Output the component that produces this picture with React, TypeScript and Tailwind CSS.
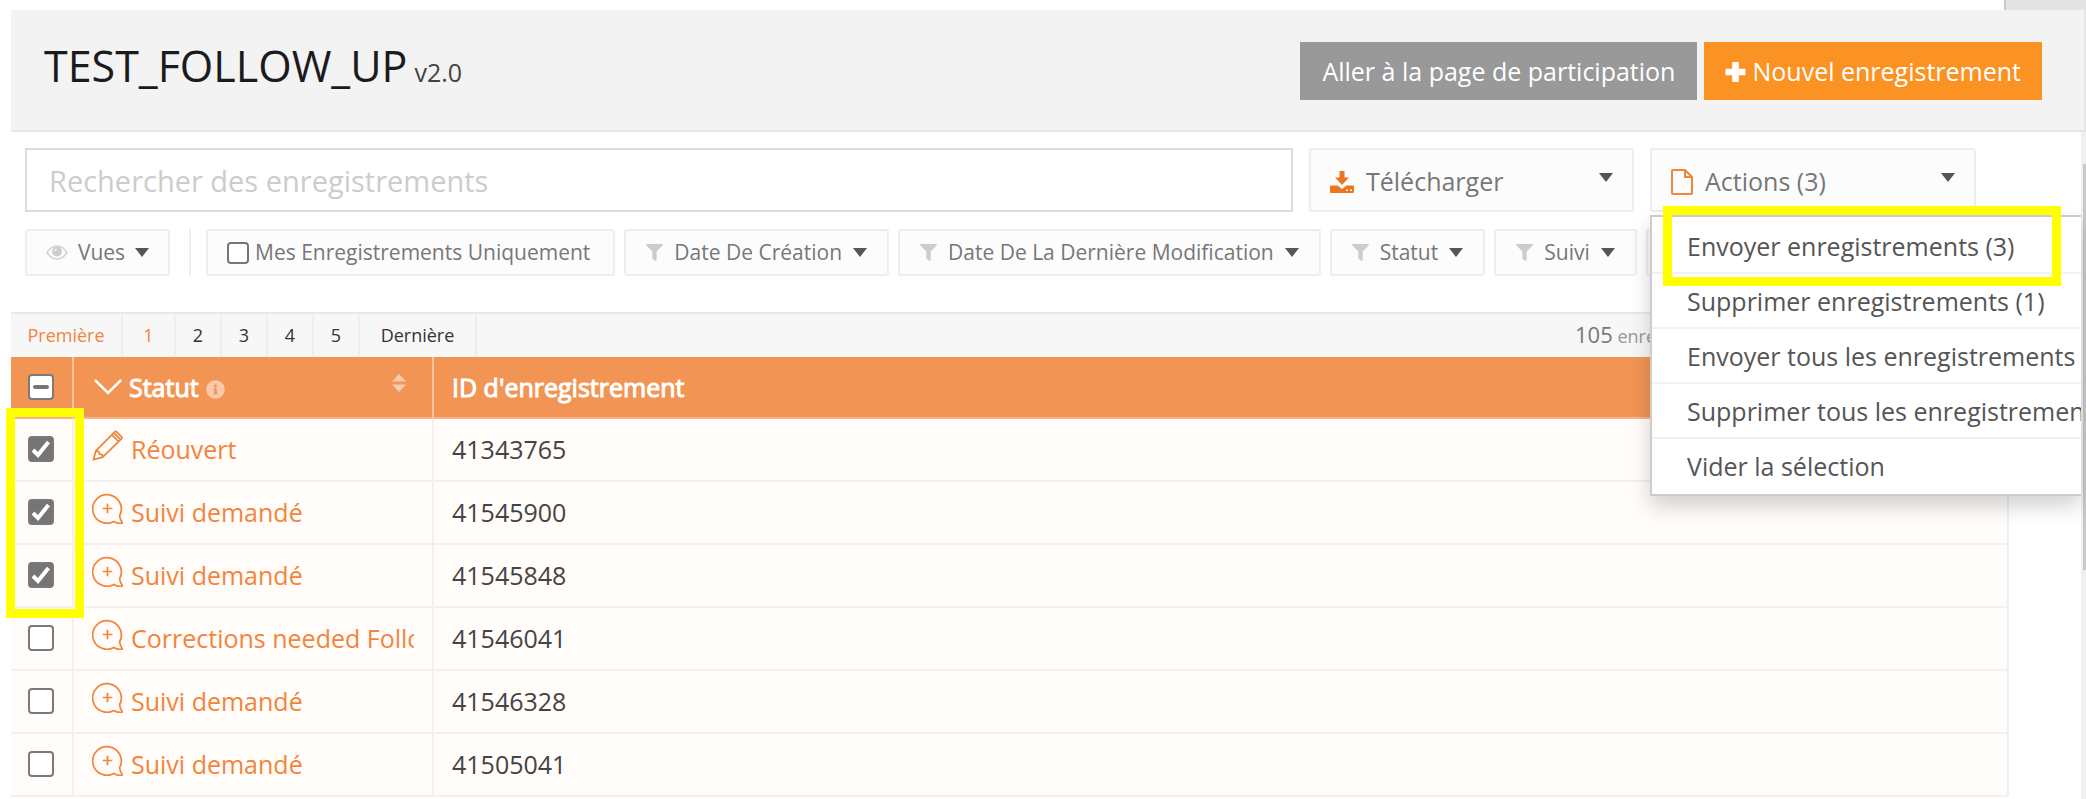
import React from 'react';
import { FaFilter, FaInfoCircle } from 'react-icons/fa';

const filters = ['Date De Création', 'Date De La Dernière Modification', 'Statut', 'Suivi'];

const pages = ['1', '2', '3', '4', '5'];

const menuItems = [
  'Envoyer enregistrements (3)',
  'Supprimer enregistrements (1)',
  'Envoyer tous les enregistrements',
  'Supprimer tous les enregistrements',
  'Vider la sélection',
];

const records = [
  { id: '41343765', status: 'Réouvert', icon: 'pencil', checked: true },
  { id: '41545900', status: 'Suivi demandé', icon: 'bubble', checked: true },
  { id: '41545848', status: 'Suivi demandé', icon: 'bubble', checked: true },
  { id: '41546041', status: 'Corrections needed Follow up', icon: 'bubble', checked: false },
  { id: '41546328', status: 'Suivi demandé', icon: 'bubble', checked: false },
  { id: '41505041', status: 'Suivi demandé', icon: 'bubble', checked: false },
];

function Caret() {
  return (
    <svg viewBox="0 0 14 9" className="h-[9px] w-[14px] shrink-0 fill-[#555]">
      <path d="M0 0h14L7 9z" />
    </svg>
  );
}

function EyeIcon() {
  return (
    <svg viewBox="0 0 22 15" className="h-[15px] w-[22px] shrink-0">
      <path d="M1 7.500Q5 1 11 1t10 6.500Q17 14 11 14T1 7.500z" fill="none" stroke="#d4d4d4" strokeWidth="1.500" />
      <circle cx="11" cy="6.500" r="5" fill="#ccc" />
      <path d="M8.500 6.500Q8.500 4 11 4" fill="none" stroke="#fff" />
    </svg>
  );
}

function PlusIcon() {
  return (
    <svg viewBox="0 0 21 21" className="h-[20px] w-[21px] shrink-0 fill-white">
      <path d="M8 0h5q1 0 1 1v6h6q1 0 1 1v5q0 1-1 1h-6v6q0 1-1 1H8q-1 0-1-1v-6H1q-1 0-1-1V8q0-1 1-1h6V1q0-1 1-1z" />
    </svg>
  );
}

function DownloadIcon() {
  return (
    <svg viewBox="0 0 24 22" className="h-[22px] w-[24px] shrink-0">
      <path d="M9.500 0h5v6.500H19L12 14 5 6.500h4.500z" fill="#ee7420" />
      <path d="M1 14.500h6.500L12 18l4.500-3.500H23q1 0 1 1V21q0 1-1 1H1q-1 0-1-1v-5.500q0-1 1-1z" fill="#ee7420" />
      <path d="M16 18.500h2v1.500h-2zM20 18.500h2v1.500h-2z" fill="#fcfcfc" />
    </svg>
  );
}

function FileIcon() {
  return (
    <svg viewBox="0 0 22 26" className="h-[26px] w-[22px] shrink-0 fill-none stroke-[#f2853c] stroke-2">
      <path d="M2 1h12l7 7v16q0 1-1 1H2q-1 0-1-1V2q0-1 1-1zM14 1v7h7" />
    </svg>
  );
}

function PencilIcon() {
  return (
    <svg viewBox="0 0 32 32" className="mb-2 h-[31px] w-[31px] shrink-0 fill-none stroke-[#f2853c] stroke-[1.8]">
      <path d="M1.500 30.500L4 21.500 23.500 2q1-1 2 0l5 5q1 1 0 2L11 28zM20.500 5l7 7M22.500 3l7 7M4 21.500l2.500.5 1.500 3 2.500.5.5 2.500" />
    </svg>
  );
}

function BubbleIcon() {
  return (
    <svg viewBox="0 0 32 32" className="mb-2 h-[31px] w-[31px] shrink-0 fill-none stroke-[#f2853c] stroke-[1.8]">
      <path d="M22.500 29.500A14.800 14.800 0 1 1 28.500 23.500Q29 28 31.500 31q-5 1-9-1.500zM16 11v10M11 16h10" />
    </svg>
  );
}

type CheckboxProps = {
  label: string;
  checked?: boolean;
  partial?: boolean;
};

function Checkbox({ label, checked, partial }: CheckboxProps) {
  return (
    <span className="grid h-[26px] w-[26px]">
      <input
        type="checkbox"
        defaultChecked={checked}
        aria-label={label}
        className="peer col-start-1 row-start-1 appearance-none rounded-[4px] border-2 border-[#7a7a7a] bg-white checked:bg-[#757575]"
      />
      <svg
        viewBox="0 0 26 26"
        className="pointer-events-none invisible col-start-1 row-start-1 fill-none stroke-white stroke-[4] peer-checked:visible"
      >
        <path d="M5 14l5 5L20.500 6" />
      </svg>
      {partial && (
        <svg viewBox="0 0 26 26" className="pointer-events-none col-start-1 row-start-1 fill-none stroke-[#757575] stroke-[4]">
          <path d="M7 13h12" strokeLinecap="round" />
        </svg>
      )}
    </span>
  );
}

export default function App() {
  return (
    <div className="flex h-screen flex-col overflow-hidden bg-white font-['Open_Sans','Noto_Sans',sans-serif] text-[#555]">
      <div className="flex h-[10px] shrink-0 justify-end">
        <div className="w-[82px] border-l-2 border-[#c8c8c8] bg-[#e4e4e4]" />
      </div>

      <header className="ml-[11px] flex h-[122px] shrink-0 justify-between border-r-2 border-b-2 border-[#e6e6e6] bg-[#f3f3f3] pr-[42px] pl-[33px]">
        <h1 className="flex items-baseline gap-[7px] pt-[26px] text-[43px] leading-[60px] text-[#1b1b1f]">
          TEST_FOLLOW_UP
          <small className="text-[25px] text-[#444]">v2.0</small>
        </h1>
        <div className="flex gap-[7px] pt-8">
          <button className="h-[58px] bg-[#999] px-[22px] pt-[2px] text-[25px] text-white">Aller à la page de participation</button>
          <button className="flex h-[58px] items-center gap-[6px] bg-[#fb9224] px-[21px] pt-[2px] text-[25px] text-white">
            <PlusIcon />
            Nouvel enregistrement
          </button>
        </div>
      </header>

      <main className="flex min-h-0 flex-1">
        <div className="min-w-0 flex-1 pl-[11px]">
          <div className="flex gap-4 pt-4 pr-[105px] pl-[14px]">
            <input
              type="text"
              aria-label="Rechercher des enregistrements"
              placeholder="Rechercher des enregistrements"
              className="h-[64px] min-w-0 flex-1 border-2 border-[#dcdcdc] px-[22px] text-[29px] placeholder:text-[#ccc]"
            />
            <button className="flex h-[64px] w-[325px] items-center gap-3 rounded-[3px] border-2 border-[#eceeef] bg-[#fcfcfc] px-[19px] pt-[3px] text-[25px] text-[#777]">
              <DownloadIcon />
              Télécharger
              <span className="ml-auto pb-2">
                <Caret />
              </span>
            </button>
            <div className="relative">
              <button className="flex h-[64px] w-[326px] items-center gap-3 rounded-[3px] border-2 border-[#eceeef] bg-[#fcfcfc] px-[19px] pt-[3px] text-[25px] text-[#777]">
                <FileIcon />
                Actions (3)
                <span className="ml-auto pb-2">
                  <Caret />
                </span>
              </button>
              <ul className="absolute top-[67px] left-0 z-10 w-[431px] overflow-hidden border-2 border-r-0 border-[#ccc] bg-white pt-[2px] shadow-[0_10px_20px_rgba(0,0,0,0.18)]">
                {menuItems.map((item) => (
                  <li key={item} className="h-[55px] border-b-2 border-[#f1f1f1] last:border-b-0">
                    <button className="block w-full pt-[7px] pl-[35px] text-left text-[25px] leading-[40px] whitespace-nowrap text-[#555]">
                      {item}
                    </button>
                  </li>
                ))}
              </ul>
              <div className="pointer-events-none absolute top-[58px] left-[13px] z-20 h-[80px] w-[398px] border-[9px] border-[#ff0]" />
            </div>
          </div>

          <div className="flex gap-[9px] overflow-hidden pt-[17px] pl-[14px] text-[21px] whitespace-nowrap text-[#777]">
            <button className="flex h-[47px] w-[145px] shrink-0 items-center justify-center gap-[10px] rounded-[3px] border-2 border-[#eceeef] bg-[#fcfcfc]">
              <EyeIcon />
              Vues
              <Caret />
            </button>
            <div className="mr-[6px] ml-[10px] w-[2px] shrink-0 bg-[#eee]" />
            <label className="flex h-[47px] shrink-0 items-center gap-[6px] rounded-[3px] border-2 border-[#eceeef] bg-[#fcfcfc] pr-[23px] pl-[19px]">
              <input type="checkbox" className="h-[22px] w-[22px] appearance-none rounded-[4px] border-2 border-[#767676] bg-white" />
              Mes Enregistrements Uniquement
            </label>
            {filters.map((label) => (
              <button
                key={label}
                className="flex h-[47px] shrink-0 items-center gap-[11px] rounded-[3px] border-2 border-[#eceeef] bg-[#fcfcfc] px-[20px]"
              >
                <FaFilter className="h-[17px] w-[17px] text-[#ccc]" />
                {label}
                <Caret />
              </button>
            ))}
            <button aria-label="Plus de filtres" className="h-[47px] w-[120px] shrink-0 rounded-[3px] border-2 border-[#eceeef] bg-[#fcfcfc]" />
          </div>

          <nav className="mr-[72px] mt-9 flex h-[45px] items-stretch border-t-2 border-[#e8e8e8] bg-[#f7f7f7] text-[18px] text-[#333]">
            <button className="w-[112px] border-r-2 border-[#eee] text-[#f2853c]">Première</button>
            {pages.map((page) => (
              <button
                key={page}
                className={page === '1' ? 'w-[53px] border-r-2 border-[#eee] text-[#f2853c]' : 'w-[46px] border-r-2 border-[#eee]'}
              >
                {page}
              </button>
            ))}
            <button className="w-[117px] border-r-2 border-[#eee]">Dernière</button>
            <p className="ml-auto w-[434px] leading-[41px] text-[#999]">
              <span className="text-[22px] text-[#777]">105</span> enregistrements
            </p>
          </nav>

          <div className="relative mr-[72px]">
            <table className="w-full table-fixed border-r-2 border-[#eee] bg-[#fffcf9] text-[25px]">
              <colgroup>
                <col className="w-[62px]" />
                <col className="w-[360px]" />
                <col />
              </colgroup>
              <thead>
                <tr className="h-[61px] border-b-2 border-[#f6b68a] bg-[#f29554] text-left text-white">
                  <th className="border-r-2 border-[#f9c49d] pl-[17px]">
                    <Checkbox label="Tout" partial />
                  </th>
                  <th className="border-r-2 border-[#f9c49d] pr-[26px] pl-[20px]">
                    <div className="flex items-center gap-[7px]">
                      <svg viewBox="0 0 28 16" className="h-[16px] w-[28px] fill-none stroke-white stroke-[2.5]">
                        <path d="M1 1l13 13L27 1" />
                      </svg>
                      <span className="pt-[2px] font-normal [-webkit-text-stroke:1px_currentColor]">Statut</span>
                      <FaInfoCircle className="mt-1 h-[19px] w-[19px] text-white/50" />
                      <svg viewBox="0 0 14 18" className="mb-2 ml-auto h-[18px] w-[14px] fill-white/50">
                        <path d="M0 7.500L7 0l7 7.500zM0 10.500h14L7 18z" />
                      </svg>
                    </div>
                  </th>
                  <th className="pt-[2px] pl-[18px] font-normal">
                    <span className="[-webkit-text-stroke:1px_currentColor]">ID d'enregistrement</span>
                  </th>
                </tr>
              </thead>
              <tbody>
                {records.map((r) => (
                  <tr key={r.id} className="h-[63px] border-b-2 border-[#f3f1f0]">
                    <td className="border-r-2 border-[#f3f1f0] pb-[2px] pl-[17px]">
                      <Checkbox label={r.id} checked={r.checked} />
                    </td>
                    <td className="border-r-2 border-[#f3f1f0] pr-[18px] pl-[18px]">
                      <div className="flex items-center gap-2 overflow-hidden whitespace-nowrap text-[#f2853c]">
                        {r.icon === 'pencil' ? <PencilIcon /> : <BubbleIcon />}
                        {r.status}
                      </div>
                    </td>
                    <td className="pl-[18px] text-[#444]">{r.id}</td>
                  </tr>
                ))}
              </tbody>
            </table>
            <div className="pointer-events-none absolute top-[51px] left-[-5px] h-[210px] w-[78px] border-[9px] border-[#ff0]" />
          </div>
        </div>

        <div className="w-[5px] bg-[#f0f0f0] pt-8 pl-[2px]">
          <div className="h-[406px] bg-[#c9c9c9]" />
        </div>
      </main>
    </div>
  );
}
